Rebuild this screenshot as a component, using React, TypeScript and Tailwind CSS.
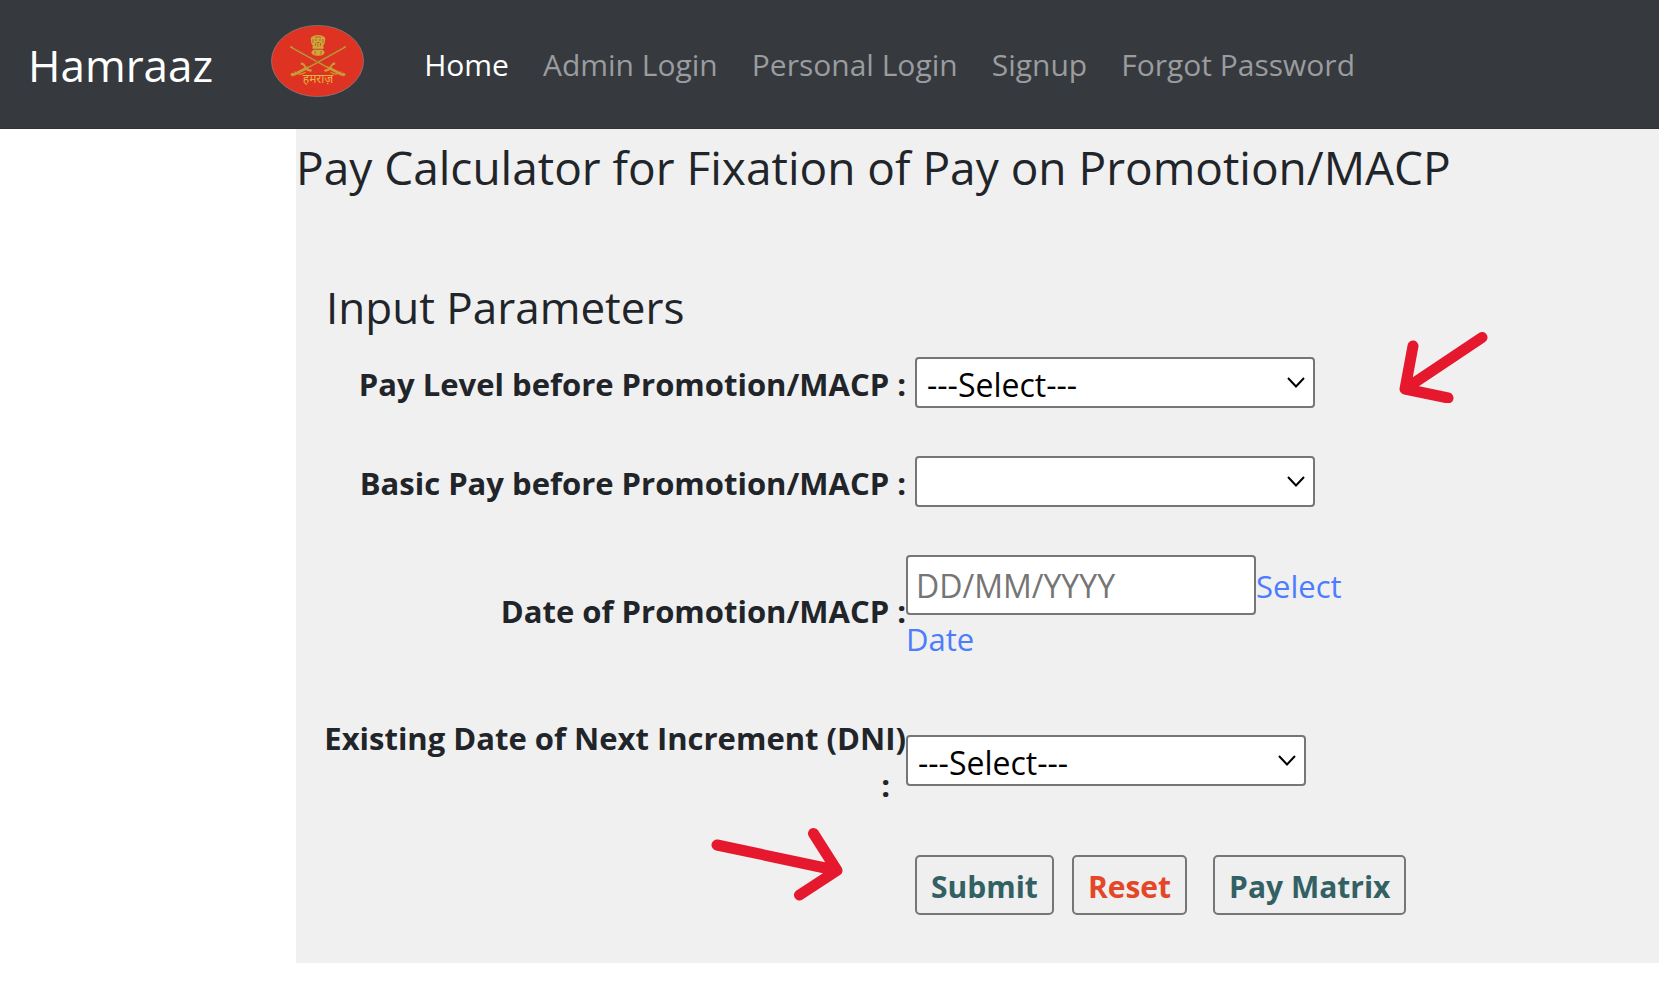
import { useState } from "react";

const navLinks = [
  { label: "Home", active: true },
  { label: "Admin Login", active: false },
  { label: "Personal Login", active: false },
  { label: "Signup", active: false },
  { label: "Forgot Password", active: false },
];

const payLevels = ["3", "4", "5", "6", "7", "8"];
const incrementDates = ["01 January", "01 July"];

const Sword = () => (
  <g stroke="#c99a35" fill="none" strokeLinecap="round">
    <path d="M20 22 L58 43" strokeWidth="1.8" />
    <path d="M22 22.4 L56 41.2" stroke="#8f3a1c" strokeWidth="0.5" />
    <path d="M58 43 L71 49.5" strokeWidth="2.6" />
    <path d="M54.5 45.5 C57 45.5 58.5 44.5 59.5 42.5 C60.5 40.5 61 39 63 38.5" strokeWidth="2" />
    <path d="M60 47.5 C64 50 67 49.5 70 47" strokeWidth="1.2" />
    <circle cx="72.5" cy="49.5" r="1.4" fill="#c99a35" strokeWidth="0.8" />
    <circle cx="54.5" cy="45.5" r="0.9" fill="#c99a35" strokeWidth="0.6" />
    <circle cx="63" cy="38.8" r="0.9" fill="#c99a35" strokeWidth="0.6" />
  </g>
);

const Logo = () => (
  <svg viewBox="0 0 93 72" className="h-[72px] w-[93px]" role="img" aria-label="Hamraaz">
    <ellipse cx="46.5" cy="36" rx="46" ry="35.6" fill="#de3323" stroke="#8d8387" strokeWidth="0.7" />
    <Sword />
    <g transform="translate(94 0) scale(-1 1)">
      <Sword />
    </g>
    {/* lion capital */}
    <g fill="#d3a43c">
      <path d="M43.5 10.6 Q47 9.2 50.5 10.6 L53.4 12 Q55 13.5 54 15.5 L53.6 18.5 L51.5 21.5 H42.5 L40.4 18.5 L40 15.5 Q39 13.5 40.6 12 Z" />
      <rect x="41.5" y="21" width="11" height="3.2" rx="0.6" />
      <path d="M42.5 24.5 H51.5 L53.6 27 Q53.8 30.5 47 30.8 Q40.2 30.5 40.4 27 Z" />
    </g>
    <g stroke="#96431c" strokeWidth="0.6" fill="none">
      <path d="M44 12.5 Q47 11 50 12.5 M44 15 H46 M48 15 H50 M45.5 17.5 H48.5 M42 14 V18 M52 14 V18 M44.5 18 V21 M47 18.5 V21.5 M49.5 18 V21" />
      <path d="M41.5 24.2 H52.5 M44 26 V29.5 M50 26 V29.5" />
    </g>
    <text
      x="47"
      y="58"
      textAnchor="middle"
      fill="#e6b43c"
      className="font-['Noto_Sans',sans-serif] text-[12px]"
    >
      हमराज़
    </text>
  </svg>
);

interface SelectBoxProps {
  id: string;
  placeholder: string;
  options: string[];
}

const SelectBox = ({ id, placeholder, options }: SelectBoxProps) => {
  const [value, setValue] = useState("");

  return (
    <div className="relative w-[400px]">
      <select
        id={id}
        value={value}
        onChange={(e) => setValue(e.target.value)}
        className="block h-[51px] w-full appearance-none rounded-[4px] border-2 border-[#767676] bg-white px-[10px] pt-1 text-[32px] leading-[43px] text-black"
      >
        <option value="">{placeholder}</option>
        {options.map((option) => (
          <option key={option} value={option}>
            {option}
          </option>
        ))}
      </select>
      <svg
        viewBox="0 0 18 12"
        className="pointer-events-none absolute top-5 right-[10px] h-3 w-[18px]"
        fill="none"
        stroke="black"
        strokeWidth="2"
      >
        <path d="M1 1 L9 9.5 L17 1" />
      </svg>
    </div>
  );
};

const labelClass = "w-[610px] shrink-0 pt-1 text-right text-[31px] leading-[47px] font-bold";
const buttonClass =
  "h-[60px] rounded-[5px] border-2 border-[#767676] bg-[#efefef] px-[14px] pt-1 text-[30px] leading-[52px] font-bold";

export default function App() {
  const [date, setDate] = useState("");

  return (
    <div className="min-h-screen bg-white font-['Open_Sans','Noto_Sans',sans-serif] text-[#212529]">
      <nav className="flex h-[129px] items-center border-b border-[#2f3237] bg-[#36393e] pt-0.5 pl-7">
        <a href="#" className="text-[44px] leading-[64px] text-white">
          Hamraaz
        </a>
        <a href="#" className="mb-2 ml-[58px]">
          <Logo />
        </a>
        <ul className="ml-[60px] flex gap-[34px] text-[30px] leading-[48px]">
          {navLinks.map((link) => (
            <li key={link.label}>
              <a href="#" className={link.active ? "text-white" : "text-[#9a9c9e]"}>
                {link.label}
              </a>
            </li>
          ))}
        </ul>
      </nav>

      <main className="relative ml-[296px] bg-[#f0f0f0] pt-2 pb-12">
        <h1 className="text-[46px] leading-[60px]">
          Pay Calculator for Fixation of Pay on Promotion/MACP
        </h1>

        <form className="mt-20" onSubmit={(e) => e.preventDefault()}>
          <h2 className="pl-[30px] text-[44px] leading-[60px]">Input Parameters</h2>

          <div className="flex items-center pt-5 pb-7">
            <label htmlFor="payLevel" className={labelClass}>
              Pay Level before Promotion/MACP :
            </label>
            <div className="pl-[9px]">
              <SelectBox id="payLevel" placeholder="---Select---" options={payLevels} />
            </div>
          </div>

          <div className="flex items-center pt-5 pb-7">
            <label htmlFor="basicPay" className={labelClass}>
              Basic Pay before Promotion/MACP :
            </label>
            <div className="pl-[9px]">
              <SelectBox id="basicPay" placeholder="" options={[]} />
            </div>
          </div>

          <div className="flex items-center pt-5 pb-7">
            <label htmlFor="promotionDate" className={labelClass}>
              Date of Promotion/MACP :
            </label>
            <div className="w-[450px] text-[31px] leading-[48px]">
              <input
                id="promotionDate"
                type="text"
                placeholder="DD/MM/YYYY"
                value={date}
                onChange={(e) => setDate(e.target.value)}
                className="h-[60px] w-[350px] rounded-[4px] border-2 border-[#767676] bg-white px-2 text-[32px] placeholder:text-[#757575]"
              />
              <a href="#" className="text-[#4d7cfe]">
                Select Date
              </a>
            </div>
          </div>

          <div className="flex items-center pt-5 pb-7">
            <label htmlFor="dni" className={labelClass}>
              Existing Date of Next Increment (DNI)
              <span className="block pr-4">:</span>
            </label>
            <SelectBox id="dni" placeholder="---Select---" options={incrementDates} />
          </div>

          <div className="flex pt-[18px] pl-[619px]">
            <button type="submit" className={`${buttonClass} text-[#336163]`}>
              Submit
            </button>
            <button
              type="reset"
              onClick={() => setDate("")}
              className={`${buttonClass} ml-[18px] text-[#e34727]`}
            >
              Reset
            </button>
            <button type="button" className={`${buttonClass} ml-[26px] text-[#336163]`}>
              Pay Matrix
            </button>
          </div>
        </form>

        {/* arrows pointing at the first field and the submit button */}
        <svg
          viewBox="0 0 90 72"
          className="pointer-events-none absolute top-[202px] left-[1102px] h-[72px] w-[90px]"
          fill="none"
          stroke="#e6182d"
          strokeWidth="11"
          strokeLinecap="round"
          strokeLinejoin="round"
        >
          <path d="M84 6.5 L7 58 M15 15 L7 58 L50 67" />
        </svg>
        <svg
          viewBox="0 0 134 76"
          className="pointer-events-none absolute top-[698px] left-[414px] h-[76px] w-[134px]"
          fill="none"
          stroke="#e6182d"
          strokeWidth="11"
          strokeLinecap="round"
          strokeLinejoin="round"
        >
          <path d="M7 18 L127 43.5 M103.5 6.5 L127 43.5 L89.5 68" />
        </svg>
      </main>
    </div>
  );
}
